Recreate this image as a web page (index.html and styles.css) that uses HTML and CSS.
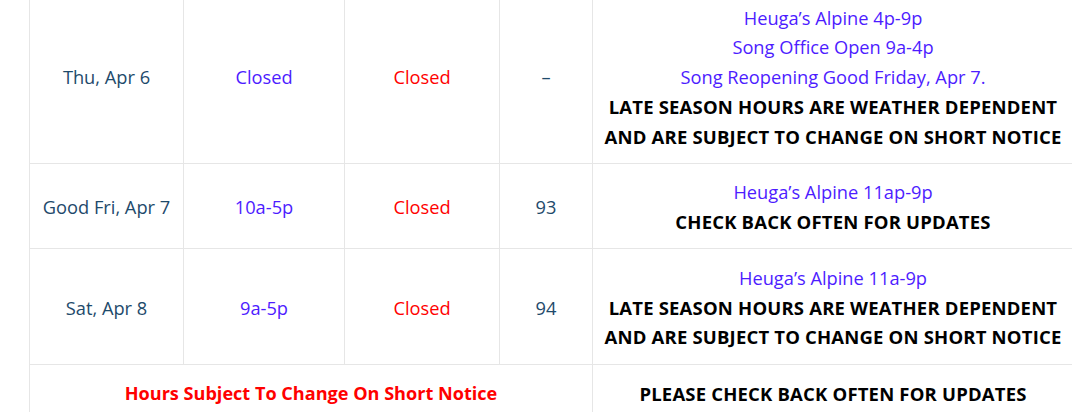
FILE: index.html
```html
<!DOCTYPE html>
<html>
<head>
<meta charset="utf-8">
<link rel="stylesheet" href="styles.css">
</head>
<body>
<div class="wrap">
<table class="hours">
  <colgroup>
    <col class="c-date"><col class="c-lift"><col class="c-nordic"><col class="c-day"><col class="c-notes">
  </colgroup>
  <tbody>
    <tr>
      <td class="date">Thu, Apr 6</td>
      <td class="open">Closed</td>
      <td class="closed">Closed</td>
      <td class="date">–</td>
      <td class="notes">
        <span class="open">Heuga’s Alpine 4p-9p</span><br>
        <span class="open">Song Office Open 9a-4p</span><br>
        <span class="open">Song Reopening Good Friday, Apr 7.</span><br>
        <strong>LATE SEASON HOURS ARE WEATHER DEPENDENT<br>AND ARE SUBJECT TO CHANGE ON SHORT NOTICE</strong>
      </td>
    </tr>
    <tr>
      <td class="date">Good Fri, Apr 7</td>
      <td class="open">10a-5p</td>
      <td class="closed">Closed</td>
      <td class="date">93</td>
      <td class="notes">
        <span class="open">Heuga’s Alpine 11ap-9p</span><br>
        <strong>CHECK BACK OFTEN FOR UPDATES</strong>
      </td>
    </tr>
    <tr>
      <td class="date">Sat, Apr 8</td>
      <td class="open">9a-5p</td>
      <td class="closed">Closed</td>
      <td class="date">94</td>
      <td class="notes">
        <span class="open">Heuga’s Alpine 11a-9p</span><br>
        <strong>LATE SEASON HOURS ARE WEATHER DEPENDENT<br>AND ARE SUBJECT TO CHANGE ON SHORT NOTICE</strong>
      </td>
    </tr>
    <tr>
      <td class="closed footer" colspan="4"><strong>Hours Subject To Change On Short Notice</strong></td>
      <td class="notes"><strong>PLEASE CHECK BACK OFTEN FOR UPDATES</strong></td>
    </tr>
  </tbody>
</table>
</div>
</body>
</html>
```
FILE: styles.css
```css
html, body {
  margin: 0;
  padding: 0;
  background: #ffffff;
  overflow: hidden;
}
.wrap {
  margin-top: -12px;
  padding-left: 29px;
}
.hours {
  border-collapse: collapse;
  table-layout: fixed;
  width: 1045px;
  font-family: "Open Sans", "Noto Sans", sans-serif;
  font-size: 18.25px;
  line-height: 29.75px;
}
.c-date { width: 154px; }
.c-lift { width: 161px; }
.c-nordic { width: 155px; }
.c-day { width: 93px; }
.hours td {
  border: 1px solid #e6e6e6;
  padding: 13.5px 2px 11.5px;
  text-align: center;
  vertical-align: middle;
}
.date { color: #1e4a6b; }
.open { color: #4d1cff; }
.closed { color: #ff0000; }
.notes { color: #000000; }
.notes strong {
  font-weight: 700;
  font-size: 18.5px;
  letter-spacing: 0.18px;
}
.footer strong {
  font-weight: 700;
  font-size: 18.1px;
}
```
